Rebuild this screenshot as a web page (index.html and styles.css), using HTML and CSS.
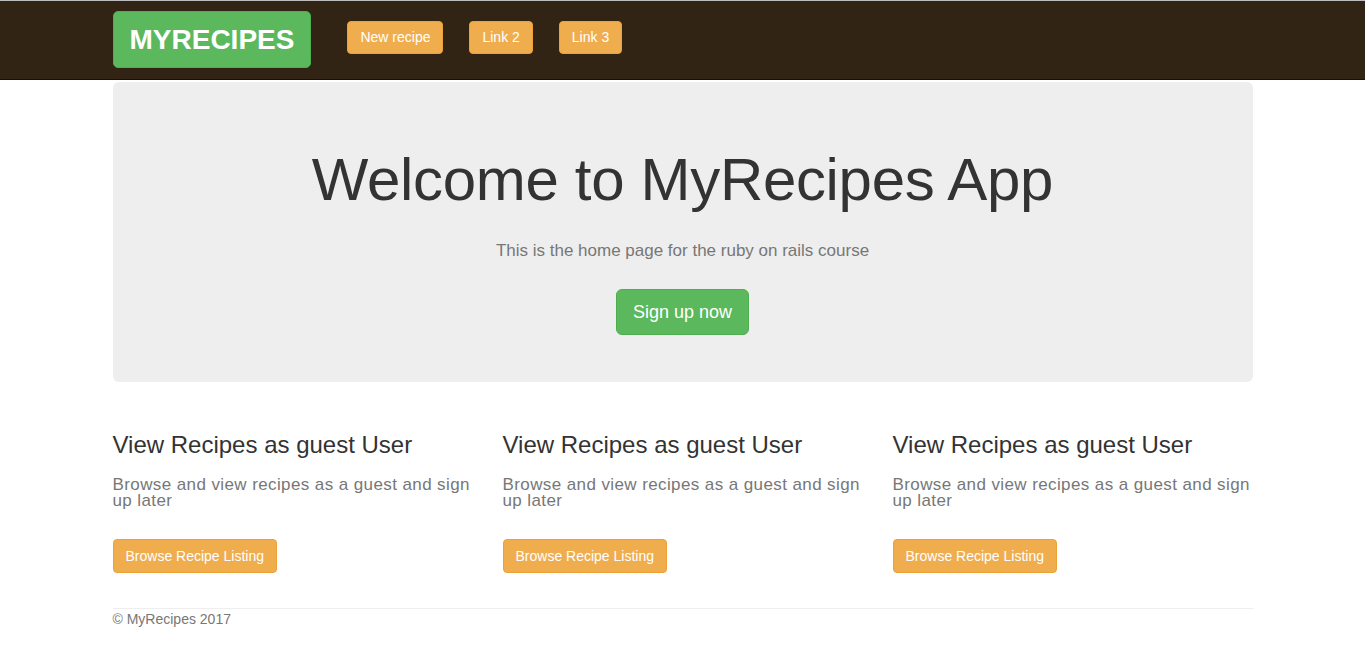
FILE: index.html
```html
<!DOCTYPE html>
<html>
<head>
<meta charset="utf-8">
<title>MyRecipes</title>
<link rel="stylesheet" href="styles.css">
</head>
<body>
<header class="navbar">
  <div class="container nav-inner">
    <a class="brand" href="#">MYRECIPES</a>
    <nav class="nav-links">
      <a class="btn btn-warning btn-nav" href="#">New recipe</a>
      <a class="btn btn-warning btn-nav" href="#">Link 2</a>
      <a class="btn btn-warning btn-nav" href="#">Link 3</a>
    </nav>
  </div>
</header>
<main class="container">
  <section class="jumbotron">
    <h1 class="jumbo-title">Welcome to MyRecipes App</h1>
    <p class="jumbo-lead">This is the home page for the ruby on rails course</p>
    <a class="btn btn-success btn-lg" href="#">Sign up now</a>
  </section>
  <section class="features">
    <div class="feature">
      <h3 class="feature-title">View Recipes as guest User</h3>
      <p class="feature-text">Browse and view recipes as a guest and sign up later</p>
      <a class="btn btn-warning" href="#">Browse Recipe Listing</a>
    </div>
    <div class="feature">
      <h3 class="feature-title">View Recipes as guest User</h3>
      <p class="feature-text">Browse and view recipes as a guest and sign up later</p>
      <a class="btn btn-warning" href="#">Browse Recipe Listing</a>
    </div>
    <div class="feature">
      <h3 class="feature-title">View Recipes as guest User</h3>
      <p class="feature-text">Browse and view recipes as a guest and sign up later</p>
      <a class="btn btn-warning" href="#">Browse Recipe Listing</a>
    </div>
  </section>
  <footer class="footer">
    <small class="copy">© MyRecipes 2017</small>
  </footer>
</main>
</body>
</html>
```
FILE: styles.css
```css
* { box-sizing: border-box; }
html, body { margin: 0; padding: 0; }
body {
  font-family: "Liberation Sans", Arial, Helvetica, sans-serif;
  font-size: 14px;
  line-height: 1.42857;
  color: #333;
  background: #fff;
}
a { text-decoration: none; }
.container {
  width: 1140px;
  margin: 0 auto;
}
.navbar {
  background: #322414;
  border-top: 1px solid #bdbdbd;
  border-bottom: 1px solid #16100a;
  height: 80px;
}
.nav-inner {
  display: flex;
  align-items: flex-start;
  height: 78px;
}
.brand {
  display: block;
  background: #5cb85c;
  border: 1px solid #4cae4c;
  border-radius: 5px;
  color: #fff;
  font-weight: bold;
  font-size: 28px;
  line-height: 55px;
  height: 57px;
  padding: 0 16px;
  margin-top: 10px;
}
.nav-links {
  display: flex;
  gap: 26px;
  margin-left: 36px;
  margin-top: 20px;
}
.btn {
  display: inline-block;
  border: 1px solid transparent;
  border-radius: 4px;
  padding: 6px 12px;
  font-size: 14px;
  line-height: 20px;
  color: #fff;
  text-align: center;
}
.btn-nav {
  line-height: 19px;
}
.btn-warning {
  background: #f0ad4e;
  border-color: #eea236;
}
.btn-success {
  background: #5cb85c;
  border-color: #4cae4c;
}
.btn-lg {
  padding: 10px 16px;
  font-size: 18px;
  line-height: 24px;
  border-radius: 6px;
}
.jumbotron {
  margin-top: 2px;
  background: #eee;
  border-radius: 6px;
  height: 300px;
  padding: 65px 60px 0;
  text-align: center;
}
.jumbo-title {
  margin: 0;
  font-size: 60px;
  font-weight: 500;
  line-height: 66px;
  letter-spacing: -0.33px;
  color: #333;
}
.jumbo-lead {
  margin: 26px 0 26px;
  font-size: 17px;
  color: #777;
  line-height: 24px;
}
.features {
  display: grid;
  grid-template-columns: repeat(3, 1fr);
  column-gap: 30px;
  margin-top: 30px;
}
.feature-title {
  margin: 20px 0 10px;
  font-size: 24px;
  font-weight: 500;
  line-height: 1.1;
  color: #333;
}
.feature-text {
  margin: 0 0 30px;
  padding-top: 9px;
  font-size: 17px;
  line-height: 16px;
  letter-spacing: 0.4px;
  color: #777;
}
.footer {
  margin-top: 35px;
  border-top: 1px solid #eee;
  padding-top: 1px;
}
.copy {
  font-size: 14px;
  color: #777;
}
```
